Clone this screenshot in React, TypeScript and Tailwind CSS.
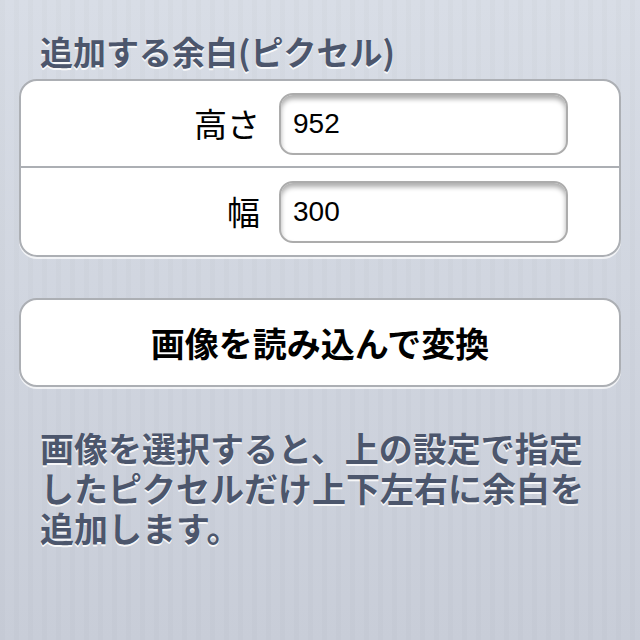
import React from "react";

const jp = "font-['Noto_Sans_CJK_JP',sans-serif]";
const etched = "[text-shadow:0_2px_0_rgba(255,255,255,0.85)] text-[#4c566c]";

function FieldRow({ label, value, last }: { label: string; value: string; last?: boolean }) {
  return (
    <div className={`flex items-center h-[87px] ${last ? "" : "border-b-2 border-[#acafb4]"}`}>
      <div className={`${jp} w-[239px] text-right text-[33px] leading-none text-black`}>{label}</div>
      <div className="ml-[19px] w-[289px] h-[62px] rounded-[14px] bg-white border-2 border-[#acacac] shadow-[inset_0_4px_5px_rgba(0,0,0,0.32)] flex items-center px-[12px]">
        <input
          defaultValue={value}
          className="w-full bg-transparent outline-none font-['Liberation_Sans',Arial,sans-serif] text-[28px] text-black"
        />
      </div>
    </div>
  );
}

export default function App() {
  return (
    <div className="min-h-screen w-full bg-[repeating-linear-gradient(90deg,rgba(0,0,0,0.014)_0_5px,transparent_5px_14px),linear-gradient(to_bottom,#d8dde6,#c8cdd8)] pt-[31px] px-[19px]">
      {/* Section header */}
      <h2 className={`${jp} ${etched} font-bold text-[33px] leading-[40px] pl-[21px]`}>
        追加する余白(ピクセル)
      </h2>

      {/* Grouped fields */}
      <div className="mt-[8px] rounded-[18px] border-2 border-[#acafb4] bg-white shadow-[0_2px_0_rgba(255,255,255,0.7)] overflow-hidden">
        <FieldRow label="高さ" value="952" />
        <FieldRow label="幅" value="300" last />
      </div>

      {/* Action button */}
      <button
        type="button"
        className={`${jp} mt-[41px] w-full h-[89px] rounded-[18px] border-2 border-[#acafb4] bg-white shadow-[0_2px_0_rgba(255,255,255,0.7)] text-black font-bold text-[34px] leading-none`}
      >
        画像を読み込んで変換
      </button>

      {/* Footer note */}
      <p className={`${jp} ${etched} font-bold text-[34px] leading-[40px] pl-[21px] pr-[16px] mt-[41px]`}>
        画像を選択すると、上の設定で指定したピクセルだけ上下左右に余白を追加します。
      </p>
    </div>
  );
}
